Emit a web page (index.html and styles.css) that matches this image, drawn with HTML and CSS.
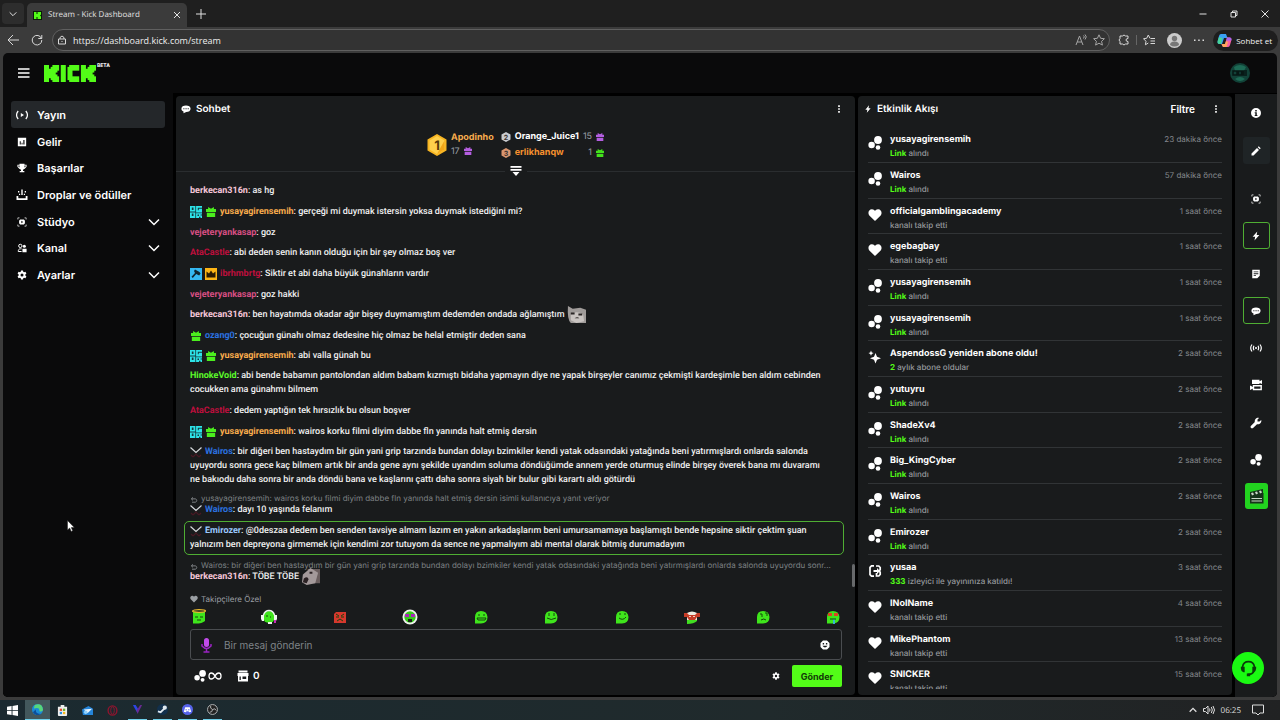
FILE: index.html
```
<!DOCTYPE html>
<html lang="tr">
<head>
<meta charset="utf-8">
<title>Stream - Kick Dashboard</title>
<link rel="stylesheet" href="styles.css">
</head>
<body>
<svg class="defs" aria-hidden="true">
  <symbol id="dots" viewBox="0 0 14 14"><circle cx="10" cy="4" r="3.9"/><circle cx="3.6" cy="9" r="3.2"/><circle cx="10" cy="11.5" r="2.3"/></symbol>
  <symbol id="heart" viewBox="0 0 14 14"><path d="M7 13 1.300 7.400C-.6 5 .8 1.500 3.800 1.300 5.300 1.200 6.300 2 7 2.900 7.700 2 8.700 1.200 10.200 1.300c3 .2 4.400 3.700 2.500 6.100z"/></symbol>
  <symbol id="spark" viewBox="0 0 14 14"><path d="M7.500 3 9 6.700 13 8.200 9 9.700 7.500 13.500 6 9.700 2 8.200 6 6.700zM3 .500l.8 1.900 1.900.7-1.900.8L3 5.800l-.8-1.900L.4 3.100l1.800-.7z"/></symbol>
  <symbol id="host" viewBox="0 0 14 14"><path fill="none" stroke="currentColor" stroke-width="1.700" d="M6 1.800H3.500L2 3.300v7.400l1.500 1.500H6M8 2h2.800l1.400 1.500v2l-.8 1.500.8 1.500v2l-1.400 1.500H8.500V9"/><path d="M5.500 6h3.500V4l3 3-3 3V8H5.500z"/></symbol>
  <symbol id="chat" viewBox="0 0 12 12"><path fill-rule="evenodd" d="M6 1.800c3.200 0 5.500 1.400 5.500 3.800S9.300 9.500 6.300 9.500L3 11.200V9C1.500 8.400.5 7.200.5 5.600.5 3.200 2.800 1.800 6 1.800zM2.800 5v1.300h1.300V5zm2.600 0v1.300h1.300V5zm2.600 0v1.300h1.300V5z"/></symbol>
  <symbol id="bolt" viewBox="0 0 12 12"><path d="M7.500.5 2 7h3l-.8 4.500L10 4.800H6.800z"/></symbol>
  <symbol id="kebab" viewBox="0 0 12 12"><path d="M5 1.500h2v2H5zM5 5h2v2H5zM5 8.500h2v2H5z"/></symbol>
  <symbol id="gear" viewBox="0 0 12 12"><path fill-rule="evenodd" d="M4.800.5h2.400l.3 1.600 1 .6 1.600-.6 1.200 2.100L10 5.400v1.200l1.300 1.200-1.200 2.100-1.600-.6-1 .6-.3 1.600H4.800l-.3-1.600-1-.6-1.600.6L.7 7.800 2 6.600V5.400L.7 4.200l1.200-2.100 1.600.6 1-.6zM6 4.200a1.800 1.800 0 1 0 0 3.600 1.800 1.800 0 0 0 0-3.600z"/></symbol>
  <symbol id="studio" viewBox="0 0 12 12"><path d="M3.500 3h5v1h1v4h-1v1h-5V8h-1V4h1z"/><path d="M5.200 4.500v3L7.500 6z" fill="#111"/><path fill="none" stroke="currentColor" stroke-width=".8" d="M1 3V1h2M9 1h2v2M11 9v2H9M3 11H1V9"/></symbol>
  <symbol id="live" viewBox="0 0 12 12"><path fill="none" stroke="currentColor" stroke-width="1.200" d="M2.200 2C.3 4.300.3 7.700 2.200 10M9.800 2c1.900 2.300 1.900 5.700 0 8"/><path d="M4.800 4v4L8 6z"/></symbol>
  <symbol id="wave" viewBox="0 0 12 12"><path fill="none" stroke="currentColor" stroke-width="1.200" d="M2 2.500C.5 4.500.5 7.500 2 9.500M10 2.500c1.500 2 1.500 5 0 7M4 3.800c-.8 1.400-.8 3 0 4.400M8 3.800c.8 1.400.8 3 0 4.400"/><circle cx="6" cy="6" r="1"/></symbol>
  <symbol id="stats" viewBox="0 0 12 12"><path fill-rule="evenodd" d="M1 1h10v10H1zm2.300 4v4h1.200V5zm2.200 2v2h1.100V7zm2.100-3.500V9H9V3.500z"/></symbol>
  <symbol id="cup" viewBox="0 0 12 12"><path fill-rule="evenodd" d="M3 .8h6V2h2.500v2.500L9.300 6.800 7.200 8v1.700h1.600v1.500H3.200V9.700h1.600V8L2.700 6.800.5 4.500V2H3zM1.700 3v1.300L3 5.500V3zM9 3v2.500l1.300-1.200V3z"/></symbol>
  <symbol id="drop" viewBox="0 0 12 12"><path d="M.500 7h1.800v2.200h7.400V7h1.800v4H.5zM5.300.5h1.400v5.500H5.300zM2 2h1.300v1.500H2zm1 2.800h1.200V6H3zM8.700 2H10v1.500H8.700zm-.9 2.800H9V6H7.800z"/></symbol>
  <symbol id="people" viewBox="0 0 12 12"><circle cx="4" cy="3.500" r="2" fill="none" stroke="currentColor" stroke-width="1.200"/><path fill="none" stroke="currentColor" stroke-width="1.200" d="M5.500 10.200h-4C1.500 8 2.500 7 4 7h1.500"/><circle cx="8.800" cy="4" r="1.800"/><path d="M6.500 6.800h5v4.200h-5z"/></symbol>
  <symbol id="chev" viewBox="0 0 12 12"><path fill="none" stroke="currentColor" stroke-width="1.500" d="M1 3.500 6 8.500 11 3.500"/></symbol>
  <symbol id="info" viewBox="0 0 12 12"><path fill-rule="evenodd" d="M6 1a5 5 0 1 1 0 10A5 5 0 0 1 6 1zm-.8 1.900v1.500h1.600V2.900zM4.700 5.200v1h.6v1.900h-.6v1h2.700v-1h-.6V5.200z"/></symbol>
  <symbol id="pencil" viewBox="0 0 12 12"><path d="M1.500 10.500V8.500L7 3 9 5l-5.500 5.500zM7.800 2.200l.9-.9 2 2-.9.9z"/></symbol>
  <symbol id="note" viewBox="0 0 12 12"><path fill-rule="evenodd" d="M1.500 1h9v7l-3 3h-6zM3.200 3v1h5.600V3zm0 2.200v1h5.600v-1zm0 2.200v1H6v-1z"/></symbol>
  <symbol id="cams" viewBox="0 0 12 12"><path d="M2 .8h7.500v1.400L12 1v4L9.500 4v1H2z"/><path fill="none" stroke="currentColor" stroke-width="1.400" d="M3.500 6.700h7.700v3.800H3.500z"/><path d="M0 6.500 3 8v1.500L0 11z"/></symbol>
  <symbol id="wrench" viewBox="0 0 12 12"><path d="M1.300 11.200.6 10.500v-1.300l4.200-4.100c-.5-2.500 1.700-4.800 4.200-4.200L7.500 2.500v2h2l1.700-1.600c.7 2.500-1.500 4.900-4.200 4.300l-4.200 4z"/></symbol>
  <symbol id="gift" viewBox="0 0 12 12"><path d="M2.500 0 6 2 9.500 0v2.500H12V6H0V2.500h2.500zM1 7h10v5H1z"/></symbol>
  <symbol id="arrows" viewBox="0 0 12 12"><path fill="none" stroke="currentColor" stroke-width="1.500" d="M4.500 2 2 4.300 4.500 6.600M2 4.300h5.500c3.500 0 3.500 5 0 5H3"/></symbol>
  <symbol id="swords" viewBox="0 0 12 12"><path fill="none" stroke="#471923" stroke-width="1.200" d="m3 11 3-3 3 3M1 9l2 2M11 9l-2 2"/><path fill="none" stroke="#d6d9dc" stroke-width="1.200" d="m.500 1.500 5.500 5 5.500-5"/></symbol>
  <symbol id="og" viewBox="0 0 12 12"><path fill="#2de3e8" d="M0 0h12v12H0z"/><path fill="#14393c" d="M1.800 1.500h1.700v2.500H1.800zM5.300 0h.8v12h-.8zM0 5.600h5.500v.8H0zM7.800 1.800H12v1H7.800zM7.800 2.800h1v1.500h-1zM1.800 7.500h1.700V10H1.800zM6 6.500h6v.7H6zM7.500 8.500H9V10H7.500zM10.500 8.500H12v1h-1.500zM9 10.800h1.500V12H9z"/></symbol>
  <symbol id="mod" viewBox="0 0 12 12"><path fill="#35b9f2" d="M0 0h12v12H0z"/><path fill="#102630" d="M5 1.500 9.500 4l1 1.500-1.300 2-3-1.600L2.800 10 1.500 8.800 5 4.900 4 3z"/></symbol>
  <symbol id="vip" viewBox="0 0 12 12"><path fill="#fdb515" d="M0 0h12v12H0z"/><path fill="#2b1b02" d="M1.500 3.500 4 5.500 6 2.500l2 3 2.500-2V9.500h-9z"/></symbol>
  <symbol id="blob" viewBox="0 0 16 16"><path fill="#3fe51c" d="M2 8Q2 2 8 2t6.500 6Q14.500 14 8 14.500H2z"/></symbol>
</svg>

<header class="tabs">
  <button class="tabmenu" aria-label="Sekmeler"><svg class="i8"><use href="#chev"/></svg></button>
  <div class="tab">
    <svg class="i9" viewBox="0 0 9 9"><path fill="#0a1c06" d="M0 0h9v9H0z"/><path fill="#53fc18" d="M1 1h2.500v2h1V1H8v2.500L7 4.500l1 1V8H4.500V6h-1v2H1z"/></svg>
    <span>Stream - Kick Dashboard</span>
    <button aria-label="Kapat"><svg class="i8" viewBox="0 0 8 8"><path class="ln" d="m1 1 6 6M7 1 1 7"/></svg></button>
  </div>
  <button class="plus" aria-label="Yeni sekme"><svg class="i10" viewBox="0 0 10 10"><path class="ln" d="M5 0v10M0 5h10"/></svg></button>
  <div class="win">
    <button aria-label="Simge durumu"><svg class="i8" viewBox="0 0 8 8"><path class="ln" d="M.500 4h7"/></svg></button>
    <button aria-label="Geri yükle"><svg class="i8" viewBox="0 0 8 8"><path class="ln" d="M1 2.500h4.500V7H1zM2.500 2.500V1H7v4.500H5.500"/></svg></button>
    <button aria-label="Pencereyi kapat"><svg class="i8" viewBox="0 0 8 8"><path class="ln" d="m.5.5 7 7m0-7-7 7"/></svg></button>
  </div>
</header>

<div class="toolbar">
  <button aria-label="Geri"><svg class="i12" viewBox="0 0 12 12"><path class="ln" d="M12 6H1M6 1 1 6l5 5"/></svg></button>
  <button aria-label="Yenile"><svg class="i12" viewBox="0 0 12 12"><path class="ln" d="M10.500 4.500A4.800 4.800 0 1 0 10.800 6M10.800 1v3.500H7.300"/></svg></button>
  <div class="url">
    <svg class="i10" viewBox="0 0 10 10"><path class="ln" d="M1.500 4h7v5h-7zM3 4V2.500q2-3 4 0V4M5 6v1"/></svg>
    <input aria-label="Adres" value="https://dashboard.kick.com/stream">
    <svg class="i12 dim" viewBox="0 0 12 12"><path class="ln" d="m1 11 3.500-9L8 11M2.200 8h4.600M8.500 1.500q1.500 1 0 3M10 .5q2.500 2.200 0 5"/></svg>
    <svg class="i12 dim" viewBox="0 0 12 12"><path class="ln" d="m6 .8 1.600 3.500 3.800.4-2.800 2.600.8 3.800L6 9.200l-3.400 1.900.8-3.800L.6 4.700l3.800-.4z"/></svg>
  </div>
  <button aria-label="Uzantılar"><svg class="i12" viewBox="0 0 12 12"><path class="ln" d="M2 2h2.500q1.500-2 3 0H10v2.500q-2 0-2 1.500t2 1.500V10H7.500q-1.500 2-3 0H2V7.500q-2-1.500 0-3z"/></svg></button>
  <i class="bar"></i>
  <button aria-label="Sık kullanılanlar"><svg class="i12" viewBox="0 0 12 12"><path class="ln" d="M7 4.300 5.300 1 3.700 4.300.5 4.700 3 7.300l-.6 3.500L5.300 9M7.500 4.500H12M7.500 7H12M7.500 9.500H12"/></svg></button>
  <button aria-label="Profil"><svg class="i15" viewBox="0 0 15 15"><circle cx="7.500" cy="7.500" r="7.500" fill="#ccc"/><circle cx="7.500" cy="5.500" r="2.700" fill="#777"/><path fill="#777" d="M3 12q0-3.500 4.500-3.500T12 12q-4.500 3-9 0z"/></svg></button>
  <button aria-label="Diğer"><svg class="i10" viewBox="0 0 10 10"><path fill="#ddd" d="M0 4.500h1.500V6H0zM4.200 4.500h1.500V6H4.200zM8.500 4.500H10V6H8.500z"/></svg></button>
  <button class="copilot"><svg class="i15" viewBox="0 0 15 15"><path fill="#3aa0f5" d="M4 1h5l1.500 4H7l-2 6H2.500Q0 11 .7 8L2 3q.5-2 2-2z"/><path fill="#45d49a" d="M.7 8 2 4l3.500 1L4 11H2.500Q0 11 .7 8z"/><path fill="#f75fa5" d="M11 14H6l-1.500-3H8l2-6.500h2.500q2.500 0 1.800 3L13 12q-.5 2-2 2z"/><path fill="#fda75c" d="M6 14 4.500 11H8l1-3 2 1-1.500 5z"/><path fill="#a866f0" d="m10 4.500 2.500 0q2.500 0 1.800 3h-5z"/></svg><span>Sohbet et</span></button>
</div>

<div class="page">
  <header class="top">
    <button aria-label="Menü"><svg class="i12" viewBox="0 0 12 12"><path d="M0 1.300h11.500v1.500H0zM0 5.300h11.500v1.500H0zM0 9.300h11.500v1.500H0z"/></svg></button>
    <svg class="logo" viewBox="0 0 31 9" preserveAspectRatio="none" role="img" aria-label="Kick">
      <g id="kk"><rect width="3" height="9"/><rect x="2" y="2" width="3" height="5"/><rect x="4" y="1" width="3" height="7"/><rect x="5" width="4" height="3"/><rect x="5" y="6" width="4" height="3"/><rect x="5" y="2" width="3" height="2"/><rect x="5" y="5" width="3" height="2"/></g>
      <rect x="10" width="3" height="9"/>
      <rect x="14" y="1" width="3" height="7"/><rect x="15" width="6" height="3"/><rect x="15" y="6" width="6" height="3"/>
      <use href="#kk" x="22"/>
    </svg>
    <sup>BETA</sup>
    <svg class="avatar" viewBox="0 0 20 20"><circle cx="10" cy="10" r="10" fill="#124238"/><path fill="#1d6a55" d="M4 4q6-4 12 0l-2 4H5zM5 16q5-4 10 0-5 4-10 0z"/><path fill="none" stroke="#071714" stroke-width="1.500" d="M3 8h4v4H3zM8.500 8h3v4h-3zM17 8h-4v4h4M13 10h4"/></svg>
  </header>

  <div class="work">
    <nav class="side">
      <a class="on" href="#"><svg class="i12"><use href="#live"/></svg><span>Yayın</span></a>
      <a href="#"><svg class="i10"><use href="#stats"/></svg><span>Gelir</span></a>
      <a href="#"><svg class="i10"><use href="#cup"/></svg><span>Başarılar</span></a>
      <a href="#"><svg class="i12"><use href="#drop"/></svg><span>Droplar ve ödüller</span></a>
      <a href="#"><svg class="i10"><use href="#studio"/></svg><span>Stüdyo</span><svg class="i12 ch"><use href="#chev"/></svg></a>
      <a href="#"><svg class="i10"><use href="#people"/></svg><span>Kanal</span><svg class="i12 ch"><use href="#chev"/></svg></a>
      <a href="#"><svg class="i10"><use href="#gear"/></svg><span>Ayarlar</span><svg class="i12 ch"><use href="#chev"/></svg></a>
    </nav>

    <section class="chat">
      <h2><svg class="i10"><use href="#chat"/></svg><span>Sohbet</span><button aria-label="Sohbet menüsü"><svg class="i10"><use href="#kebab"/></svg></button></h2>
      <div class="leaders">
        <div class="first">
          <svg class="hex" viewBox="0 0 20 22"><path fill="#f7b522" d="M10 0 19.500 5.500v11L10 22 .5 16.500v-11z"/><path fill="#ffd04c" d="m10 2 7.500 4.500v9L10 20l-7.500-4.500v-9z"/><path fill="#f3a719" d="m10 20 7.500-4.500v-9z"/><text x="10" y="15.500" text-anchor="middle">1</text></svg>
          <div><b class="c-or">Apodinho</b><p>17 <svg class="i8 c-pu"><use href="#gift"/></svg></p></div>
        </div>
        <div class="others">
          <svg class="i10 medal" viewBox="0 0 10 10"><path fill="#c9ccd0" d="m5 0 4.500 2.500v5L5 10 .5 7.500v-5z"/><text x="5" y="7.500" text-anchor="middle">2</text></svg><b>Orange_Juice1</b><span>15</span><svg class="i8 c-pu"><use href="#gift"/></svg>
          <svg class="i10 medal" viewBox="0 0 10 10"><path fill="#d99670" d="m5 0 4.500 2.500v5L5 10 .5 7.500v-5z"/><text x="5" y="7.500" text-anchor="middle">3</text></svg><b class="c-do">erlikhanqw</b><span>1</span><svg class="i8 c-gr"><use href="#gift"/></svg>
        </div>
      </div>
      <div class="fold"><button aria-label="Sıralamayı aç"><svg class="i12" viewBox="0 0 12 12"><path d="M.5 1h11v1.800H.5zM.5 4h11v1.800H.5zM2.500 7h7L6 11z"/></svg></button></div>

      <ul class="log">
        <li><b class="c-pk">berkecan316n</b>: as hg</li>
        <li><svg class="bd"><use href="#og"/></svg><svg class="bd gf"><use href="#gift"/></svg><b class="c-or">yusayagirensemih</b>: gerçeği mi duymak istersin yoksa duymak istediğini mi?</li>
        <li><b class="c-ro">vejeteryankasap</b>: goz</li>
        <li><b class="c-rd">AtaCastle</b>: abi deden senin kanın olduğu için bir şey olmaz boş ver</li>
        <li><svg class="bd"><use href="#mod"/></svg><svg class="bd"><use href="#vip"/></svg><b class="c-rd">ibrhmbrtg</b>: Siktir et abi daha büyük günahların vardır</li>
        <li><b class="c-ro">vejeteryankasap</b>: goz hakki</li>
        <li><b class="c-pk">berkecan316n</b>: ben hayatımda okadar ağır bişey duymamıştım dedemden ondada ağlamıştım <svg class="emo" viewBox="0 0 20 20"><path fill="#a09c9a" d="M1 1 6 4l8-1 6 2v14H4Q0 15 1 1z"/><path fill="#c9c4c1" d="M4 10q6-5 13 0l1 7-8 2-6-3z"/><path fill="#2b2726" d="M4 8h4v2H4zM12 9h4v2h-4zM8 14q3-2 5 0z"/></svg></li>
        <li><svg class="bd gf"><use href="#gift"/></svg><b class="c-bl">ozang0</b>: çocuğun günahı olmaz dedesine hiç olmaz be helal etmiştir deden sana</li>
        <li><svg class="bd"><use href="#og"/></svg><svg class="bd gf"><use href="#gift"/></svg><b class="c-or">yusayagirensemih</b>: abi valla günah bu</li>
        <li><b class="c-gn">HinokeVoid</b>: abi bende babamın pantolondan aldım babam kızmıştı bidaha yapmayın diye ne yapak birşeyler canımız çekmişti kardeşimle ben aldım cebinden<br>cocukken ama günahmı bilmem</li>
        <li><b class="c-rd">AtaCastle</b>: dedem yaptığın tek hırsızlık bu olsun boşver</li>
        <li><svg class="bd"><use href="#og"/></svg><svg class="bd gf"><use href="#gift"/></svg><b class="c-or">yusayagirensemih</b>: wairos korku filmi diyim dabbe fln yanında halt etmiş dersin</li>
        <li><svg class="bd"><use href="#swords"/></svg><b class="c-bl">Wairos</b>: bir diğeri ben hastaydım bir gün yani grip tarzında bundan dolayı bzimkiler kendi yatak odasındaki yatağında beni yatırmışlardı onlarda salonda<br>uyuyordu sonra gece kaç bilmem artık bir anda gene aynı şekilde uyandım soluma döndüğümde annem yerde oturmuş elinde birşey överek bana mı duvaramı<br>ne bakıodu daha sonra bir anda döndü bana ve kaşlarını çattı daha sonra siyah bir bulur gibi karartı aldı götürdü</li>
        <li><p><svg class="i8"><use href="#arrows"/></svg>yusayagirensemih: wairos korku filmi diyim dabbe fln yanında halt etmiş dersin isimli kullanıcıya yanıt veriyor</p><svg class="bd"><use href="#swords"/></svg><b class="c-bl">Wairos</b>: dayı 10 yaşında felanım</li>
        <li class="boxed"><svg class="bd"><use href="#swords"/></svg><b class="c-lb">Emirozer</b>: @0deszaa dedem ben senden tavsiye almam lazım en yakın arkadaşlarım beni umursamamaya başlamıştı bende hepsine siktir çektim şuan<br>yalnızım ben depreyona girmemek için kendimi zor tutuyom da sence ne yapmalıyım abi mental olarak bitmiş durumadayım</li>
        <li><p><svg class="i8"><use href="#arrows"/></svg>Wairos: bir diğeri ben hastaydım bir gün yani grip tarzında bundan dolayı bzimkiler kendi yatak odasındaki yatağında beni yatırmışlardı onlarda salonda uyuyordu sonr...</p><b class="c-pk">berkecan316n</b>: TÖBE TÖBE <svg class="emo" viewBox="0 0 20 20"><path fill="#6a5e5e" d="M7 2h13v15H9z"/><path fill="#a3999a" d="M2 8 10 1l8 5-3 11-9 2-5-3z"/><path fill="#2a2123" d="M3 12q4-3 5 1l-2 4-4-1zM9 5h3v2H9z"/></svg></li>
      </ul>

      <div class="foot">
        <p class="only"><svg class="i8"><use href="#heart"/></svg>Takipçilere Özel</p>
        <div class="emotes">
          <button aria-label="Melek"><svg viewBox="0 0 16 16"><path fill="#3fe51c" d="M2 3h12v9q-3 3-12 2.500z"/><ellipse cx="8" cy="2" rx="6.500" ry="1.300" fill="none" stroke="#e8b92f" stroke-width="1.300"/><path class="face" d="M4 8h3M9 8h3M6 11h4"/></svg></button>
          <button aria-label="Kulaklık"><svg viewBox="0 0 16 16"><circle cx="8" cy="8" r="6" fill="#3fe51c"/><path fill="none" stroke="#eef3ee" stroke-width="1.500" d="M2.500 6Q4 1.500 8 1.500T13.500 6"/><path fill="#f1f4f1" d="M0 6h3v6H1L0 10zM13 6h3v4l-1 2h-2zM7 13h4v2H7z"/><path fill="#c832b5" d="M13 11h2v3h-2z"/><path class="face" d="M5 7h2M9 8h1"/></svg></button>
          <button aria-label="Kızgın"><svg viewBox="0 0 16 16"><path fill="#d5382d" d="M4 3h10v11H2V5z"/><path class="face" d="m4 5 3 2M12 5 9 7M5 12l3-2 3 2M4 8h3M9 8h3"/></svg></button>
          <button aria-label="Parti"><svg viewBox="0 0 16 16"><circle cx="8" cy="8" r="7.500" fill="#f0f1ef"/><circle cx="8" cy="8" r="5.700" fill="#36c91a"/><path fill="#a82ab8" d="M3 5h4v3H3zM9 5h4v3H9z"/><path fill="#1b241b" d="M6 10h4v3H6z"/></svg></button>
          <button aria-label="Gülen"><svg viewBox="0 0 16 16"><use href="#blob"/><path class="face" d="M5 6h2M10 6h2M4 9h9l-1 2H5z"/></svg></button>
          <button aria-label="Mutlu"><svg viewBox="0 0 16 16"><use href="#blob"/><path class="face" d="M6 4v3M11 4v3M4 9q4 3 9 0"/></svg></button>
          <button aria-label="Neşeli"><svg viewBox="0 0 16 16"><use href="#blob"/><path class="face" d="M5 5h2M10 5h2M5 9q4 3 7-1"/></svg></button>
          <button aria-label="Maskeli"><svg viewBox="0 0 16 16"><path fill="#42df22" d="M3 8h10v4q-3 3-10 3z"/><path fill="#eeece2" d="M3 4q5-3 10 0v7H3z"/><path fill="#c63c27" d="M0 4h3l2 2h6l2-2h3v4h-3l-2 3H5L3 8H0z"/><path fill="#f0d0c0" d="M5 7h2v1H5zM9 7h2v1H9z"/></svg></button>
          <button aria-label="Düşünen"><svg viewBox="0 0 16 16"><use href="#blob"/><path class="face" d="M5 5h2v3M10 4h2v3M6 11q3-2 5 0"/></svg></button>
          <button aria-label="Hayran"><svg viewBox="0 0 16 16"><use href="#blob"/><path fill="#d94724" d="M3 4h4v3H3zM9 4h4v3H9z"/><path fill="#37b8d1" d="M8 10h2v5H8z"/><path class="face" d="M5 10h6"/></svg></button>
        </div>
        <div class="box">
          <svg class="mic" viewBox="0 0 12 16"><rect x="3.500" y="1" width="5" height="9" rx="2.500" fill="#c24bea"/><path fill="none" stroke="#9a23c2" stroke-width="1.500" d="M1.500 7v2q4.500 5 9 0V7M6 12v3M3 15h6"/></svg>
          <input aria-label="Bir mesaj gönderin" placeholder="Bir mesaj gönderin">
          <button aria-label="Emoji"><svg class="i10" viewBox="0 0 10 10"><path fill-rule="evenodd" d="M3 .5h4L9.500 3v4L7 9.500H3L.5 7V3zM2.700 3v1.500h1.400V3zm3.200 0v1.500h1.400V3zM2.500 5.800Q5 9.300 7.500 5.800z"/></svg></button>
        </div>
        <div class="send">
          <svg class="i12"><use href="#dots"/></svg>
          <svg class="inf" viewBox="0 0 14 10"><path fill="none" stroke="currentColor" stroke-width="1.300" d="M7 5C5 1 1 1 1 5s4 4 6 0 6-4 6 0-4 4-6 0z"/></svg>
          <svg class="i12 shop" viewBox="0 0 12 12"><path fill-rule="evenodd" d="M1.500.5h9v2h-9zM.5 3h11v3H11v5.500H1V6H.5zm2 3.500V10h1.300V6.500zm3 0V9h3.700V6.500z"/></svg>
          <b>0</b>
          <button aria-label="Ayarlar" class="cog"><svg class="i8"><use href="#gear"/></svg></button>
          <button class="go">Gönder</button>
        </div>
      </div>
      <i class="thumb"></i>
    </section>

    <section class="feed">
      <h2><svg class="i8"><use href="#bolt"/></svg><span>Etkinlik Akışı</span><button>Filtre</button><button aria-label="Akış menüsü"><svg class="i10"><use href="#kebab"/></svg></button></h2>
      <ul>
        <li><svg><use href="#dots"/></svg><div><b>yusayagirensemih</b><p><em>Link</em> alındı</p></div><time>23 dakika önce</time></li>
        <li><svg><use href="#dots"/></svg><div><b>Wairos</b><p><em>Link</em> alındı</p></div><time>57 dakika önce</time></li>
        <li><svg><use href="#heart"/></svg><div><b>officialgamblingacademy</b><p>kanalı takip etti</p></div><time>1 saat önce</time></li>
        <li><svg><use href="#heart"/></svg><div><b>egebagbay</b><p>kanalı takip etti</p></div><time>1 saat önce</time></li>
        <li><svg><use href="#dots"/></svg><div><b>yusayagirensemih</b><p><em>Link</em> alındı</p></div><time>1 saat önce</time></li>
        <li><svg><use href="#dots"/></svg><div><b>yusayagirensemih</b><p><em>Link</em> alındı</p></div><time>1 saat önce</time></li>
        <li><svg><use href="#spark"/></svg><div><b>AspendossG yeniden abone oldu!</b><p><em>2</em> aylık abone oldular</p></div><time>2 saat önce</time></li>
        <li><svg><use href="#dots"/></svg><div><b>yutuyru</b><p><em>Link</em> alındı</p></div><time>2 saat önce</time></li>
        <li><svg><use href="#dots"/></svg><div><b>ShadeXv4</b><p><em>Link</em> alındı</p></div><time>2 saat önce</time></li>
        <li><svg><use href="#dots"/></svg><div><b>Big_KingCyber</b><p><em>Link</em> alındı</p></div><time>2 saat önce</time></li>
        <li><svg><use href="#dots"/></svg><div><b>Wairos</b><p><em>Link</em> alındı</p></div><time>2 saat önce</time></li>
        <li><svg><use href="#dots"/></svg><div><b>Emirozer</b><p><em>Link</em> alındı</p></div><time>2 saat önce</time></li>
        <li><svg><use href="#host"/></svg><div><b>yusaa</b><p><em>333</em> izleyici ile yayınınıza katıldı!</p></div><time>3 saat önce</time></li>
        <li><svg><use href="#heart"/></svg><div><b>INoIName</b><p>kanalı takip etti</p></div><time>4 saat önce</time></li>
        <li><svg><use href="#heart"/></svg><div><b>MikePhantom</b><p>kanalı takip etti</p></div><time>13 saat önce</time></li>
        <li><svg><use href="#heart"/></svg><div><b>SNICKER</b><p>kanalı takip etti</p></div><time>15 saat önce</time></li>
      </ul>
    </section>

    <aside class="rail">
      <button aria-label="Bilgi"><svg class="i12"><use href="#info"/></svg></button>
      <button class="soft" aria-label="Düzenle"><svg class="i12"><use href="#pencil"/></svg></button>
      <button class="gap" aria-label="Önizleme"><svg class="i10"><use href="#studio"/></svg></button>
      <button class="sel" aria-label="Etkinlik"><svg class="i10"><use href="#bolt"/></svg></button>
      <button aria-label="Notlar"><svg class="i10"><use href="#note"/></svg></button>
      <button class="sel" aria-label="Sohbet"><svg class="i10"><use href="#chat"/></svg></button>
      <button aria-label="Yayın"><svg class="i12"><use href="#wave"/></svg></button>
      <button aria-label="Kameralar"><svg class="i12"><use href="#cams"/></svg></button>
      <button aria-label="Araçlar"><svg class="i12"><use href="#wrench"/></svg></button>
      <button aria-label="Linkler"><svg class="i12"><use href="#dots"/></svg></button>
      <button class="clap" aria-label="Klip"><svg class="i15" viewBox="0 0 15 15"><path fill="#17331a" d="M1 3 14 0v4h.5v10.500H1z"/><path fill="#cbd8c8" d="m2 4 2-.5 1 2-2 1zM6 3l2-.5 1 2-2 1zM10 2l2-.5 1 2-2 1zM2.500 9H13v1H2.500zM2.500 11.500H13v1H2.500z"/></svg></button>
    </aside>
  </div>
  <button class="help" aria-label="Destek"><svg viewBox="0 0 20 20"><path fill="none" stroke="#0a3a0a" stroke-width="2" d="M3 10V8q1-6 7-6t7 6v2q0 6-6 7H9"/><path fill="#0a3a0a" d="M1 8h4.500v6.500H4Q1 13 1 10zM19 8h-4.500v6.500H16Q19 13 19 10zM8 16h4v3H8z"/></svg></button>
</div>

<footer class="task">
  <button aria-label="Başlat"><svg viewBox="0 0 12 12"><path fill="#fff" d="m0 2 5-.8v4.500H0zM6 1l6-1v5.700H6zM0 6.500h5V11l-5-.8zM6 6.500h6V12l-6-1z"/></svg></button>
  <button class="cur" aria-label="Edge"><svg viewBox="0 0 12 12"><circle cx="6" cy="6" r="6" fill="#1b8bd6"/><path fill="#57d67a" d="M3 1q8-3 9 5 0 3-4 2 1-5-6-3z"/><path fill="#0d4f9a" d="M4 6q0 5 6 5-6 3-9-2z"/></svg></button>
  <button aria-label="Mağaza"><svg viewBox="0 0 12 12"><path fill="#eee" d="M1 2h10v9q0 1-1 1H2q-1 0-1-1zM4 0h4v2H4z"/><path fill="#e64c2d" d="M3 4h2.500v2.500H3z"/><path fill="#6bb12f" d="M6.500 4H9v2.500H6.500z"/><path fill="#2b8de0" d="M3 7.500h2.500V10H3z"/><path fill="#f5b51f" d="M6.500 7.500H9V10H6.500z"/></svg></button>
  <button aria-label="Posta"><svg viewBox="0 0 12 12"><path fill="#2584d8" d="m0 5 7-4 5 3v7H1z"/><path fill="#e8f3fc" d="m2 5 9-1-5 5z"/><circle cx="4" cy="8" r="2" fill="#8fd0fb"/></svg></button>
  <button aria-label="Opera"><svg viewBox="0 0 12 12"><ellipse cx="6" cy="6" rx="4.800" ry="5" fill="none" stroke="#90142e" stroke-width="1.500"/><ellipse cx="6" cy="6" rx="2" ry="4" fill="none" stroke="#90142e"/></svg></button>
  <button class="run" aria-label="Valorant"><svg viewBox="0 0 12 12"><path fill="#2d45e5" d="m1 1 5 9 1-4-3-5z"/><path fill="#6a2a92" d="M11 1 6 11 5 7l4-6z"/></svg></button>
  <button class="run" aria-label="Steam"><svg viewBox="0 0 12 12"><circle cx="6" cy="6" r="6" fill="#12304c"/><path fill="none" stroke="#dfe8ee" stroke-width="2" d="M1 8 4 9l4.500-4.500"/><circle cx="8.500" cy="4" r="2.300" fill="#dfe8ee"/></svg></button>
  <button class="run" aria-label="Discord"><svg viewBox="0 0 12 12"><circle cx="6" cy="6" r="6" fill="#5663ea"/><path fill="#fff" d="M3.500 3.500h5l1.500 5-2 .5-1-1H5L4 9l-2-.5z"/><path fill="#5663ea" d="M4 5.500h1v1.500H4zM7 5.500h1v1.500H7z"/></svg></button>
  <button class="run" aria-label="OBS"><svg viewBox="0 0 12 12"><circle cx="6" cy="6" r="5.400" fill="#222" stroke="#b9bcbd"/><path fill="none" stroke="#b9bcbd" d="M6 6Q3 5 4 2M6 6q3-2 4 1M6 6q0 3-3 3"/></svg></button>
  <div class="tray">
    <svg class="i8" viewBox="0 0 12 12"><path class="ln wide" d="M1 8.500 6 3.500 11 8.500"/></svg>
    <svg class="i12" viewBox="0 0 12 12"><path class="ln" d="M.5 4.500h2L5 2v8L2.500 7.500h-2zM6.500 4.500q1 1.500 0 3M8.300 3q2 3 0 6M10 2q3 4 0 8"/></svg>
    <time>06:25</time>
    <svg class="i12" viewBox="0 0 12 12"><path class="ln" d="M.5 1h11v8H8l-2 2-2-2H.5z"/></svg>
  </div>
</footer>
<svg class="cursor" viewBox="0 0 8 12"><path fill="#fff" stroke="#222" stroke-width=".5" d="M.5.500v9.500l2.200-2 1.500 3.500 1.500-.7L4.300 7.500h3z"/></svg>
</body>
</html>
```
FILE: styles.css
```
* { box-sizing: border-box; }
html, body { height: 100%; }
body {
  margin: 0;
  display: flex;
  flex-direction: column;
  overflow: hidden;
  background: #3b3b3b;
  color: #fff;
  font-family: Inter, "Liberation Sans", sans-serif;
  font-size: 9px;
  text-rendering: geometricPrecision;
}
button, input { font: inherit; color: inherit; background: none; border: 0; padding: 0; margin: 0; }
button { display: flex; align-items: center; justify-content: center; }
ul, p, h2 { margin: 0; padding: 0; list-style: none; }
a { color: inherit; text-decoration: none; }
svg { fill: currentColor; flex: none; }
b { font-weight: 600; }
.defs { position: absolute; width: 0; height: 0; }
.ln { fill: none; stroke: currentColor; stroke-width: 1; }
.wide { stroke-width: 2; }
.i8 { width: 8px; height: 8px; }
.i9 { width: 9px; height: 9px; }
.i10 { width: 10px; height: 10px; }
.i12 { width: 12px; height: 12px; }
.i15 { width: 15px; height: 15px; }

/* browser frame */
.tabs {
  display: flex;
  align-items: stretch;
  height: 27px;
  flex: none;
  background: #1f1f1f;
  font-family: "Open Sans", "Noto Sans", sans-serif;
  color: #e2e2e2;
}
.tabmenu { width: 22px; margin: 3px 3px 3px 2px; background: #2d2d2d; border-radius: 4px; }
.tab {
  display: flex;
  align-items: center;
  gap: 6px;
  width: 160px;
  margin-top: 3px;
  padding: 0 6px;
  background: #3b3b3b;
  border-radius: 5px 5px 0 0;
  font-size: 8px;
}
.tab span { padding-bottom: 1px; }
.tab button { margin-left: auto; }
.plus { width: 27px; }
.win { display: flex; margin-left: auto; }
.win button { width: 31px; }
.toolbar {
  display: flex;
  align-items: center;
  height: 26px;
  flex: none;
  padding: 0 2px 0 7px;
  gap: 12px;
  color: #d8d8d8;
  font-family: "Open Sans", "Noto Sans", sans-serif;
}
.url {
  display: flex;
  align-items: center;
  flex: 1;
  gap: 6px;
  height: 22px;
  margin: 0 -4px 0 -3px;
  padding: 0 4px;
  background: #333;
  border: 1px solid #606060;
  border-radius: 11px;
}
.url input { flex: 1; min-width: 0; color: #eee; }
.dim { opacity: .7; }
.bar { width: 1px; height: 10px; margin: 0 -6px; background: #666; }
.copilot { gap: 4px; height: 21px; margin-left: -3px; padding: 0 6px 0 4px; border-radius: 11px; background: #1e1e1e; color: #f3f3f3; font-size: 8px; }

/* dashboard */
.page {
  position: relative;
  display: flex;
  flex-direction: column;
  flex: 1;
  min-height: 0;
  margin: 0 3px 3px;
  background: #0a0a0b;
  border-radius: 5px;
  overflow: hidden;
}
.top { display: flex; align-items: center; height: 40px; flex: none; padding: 0 27px 0 15px; }
.logo { width: 52px; height: 17px; margin-left: 14px; color: #53fc18; }
.top sup { align-self: flex-start; margin-top: 10px; margin-left: 1px; font-size: 5px; line-height: 6px; font-weight: 700; }
.avatar { width: 20px; height: 20px; margin-left: auto; }
.work { display: flex; flex: 1; min-height: 0; background: #000; gap: 3px; padding-top: 3px; }
.side { width: 170px; flex: none; padding: 8px 8px 6px; margin-top: -3px; background: #0a0a0b; font-size: 11px; }
.side a { display: flex; align-items: center; height: 27px; padding: 0 5px; font-weight: 600; border-radius: 3px; }
.side a:nth-child(3n) { height: 26px; }
.side a > svg:first-child { width: 12px; }
.side span { margin-left: 9px; }
.side .on { background: #24272a; }
.ch { margin-left: auto; }

.chat, .feed { background: #191b1c; border-radius: 4px; margin-bottom: 2px; }
h2 { display: flex; align-items: center; height: 26px; flex: none; font-size: 10px; font-weight: 600; }
.chat { position: relative; display: flex; flex-direction: column; flex: 1; min-width: 0; }
.chat h2 { padding: 0 11px 0 5px; gap: 5px; }
.chat h2 button { margin-left: auto; }
.leaders { display: flex; justify-content: center; gap: 7px; padding-top: 7px; height: 44px; line-height: 14px; color: #9aa0a5; }
.leaders b { font-weight: 700; }
.first { display: flex; align-items: center; gap: 4px; height: 31px; }
.first b, .first p { display: block; }
.first p svg { margin-left: 2px; vertical-align: -1px; }
.hex { width: 20px; height: 22px; }
.hex text { font-size: 13px; font-weight: 700; fill: #573808; }
.medal text { font-size: 7px; font-weight: 700; fill: #3a3330; }
.others { display: grid; grid-template-columns: 10px auto auto 8px; column-gap: 4px; row-gap: 2px; align-items: center; align-content: start; padding-top: 1px; }
.others b { color: #fff; }
.others span { text-align: right; }
.others .c-do { color: #f7912f; }
.fold { display: flex; align-items: center; gap: 5px; height: 12px; margin-top: -1px; flex: none; }
.fold::before, .fold::after { content: ""; flex: 1; height: 1px; background: #2a2d2f; }
.c-or { color: #f9ad4d; }
.c-pu { color: #b45ee0; }
.c-gr { color: #43e21c; }
.c-pk { color: #f6c6d8; }
.c-ro { color: #d84f83; }
.c-rd { color: #bd0f3d; }
.c-bl { color: #2b72e0; }
.c-gn { color: #5dfb2a; }
.c-lb { color: #9cc9ff; }

.log { flex: 1; min-height: 0; padding: 7px 11px 0 14px; overflow: hidden; font-family: Roboto, Inter, sans-serif; line-height: 14px; font-weight: 500; color: #f0f0f0; }
.log b { font-weight: 700; }
.log li { margin-bottom: 7px; white-space: nowrap; }
.log li:nth-child(3n), .log li:nth-child(8) { margin-bottom: 6px; }
.bd { width: 12px; height: 12px; margin: -2px 3px -2px 0; vertical-align: -2px; }
.gf { height: 10px; color: #4bee1e; vertical-align: -1px; }
.emo { width: 19px; height: 19px; margin: -5px 0; vertical-align: middle; }
.log p { height: 10px; margin-top: -1px; font-family: Inter, sans-serif; font-size: 8px; font-weight: 400; line-height: 10px; color: #7d8184; overflow: hidden; text-overflow: ellipsis; }
.log p svg { margin: -2px 3px -2px 0; vertical-align: -1px; }
.log .boxed { margin: -3px 0 4px -6px; padding: 2px 5px; border: 1px solid #4fae33; border-radius: 5px; }

.foot { flex: none; padding: 0 13px 8px 14px; }
.only { display: flex; align-items: center; gap: 3px; height: 14px; font-size: 8px; color: #9b9fa3; }
.emotes { display: flex; justify-content: space-between; height: 23px; align-items: center; padding: 0 1px 2px; }
.emotes svg { width: 16px; height: 16px; }
.face { fill: none; stroke: #16440d; stroke-width: 1; }
.box { display: flex; align-items: center; height: 31px; padding: 0 11px 0 9px; border: 1px solid #4a4d50; border-radius: 3px; font-size: 10px; }
.mic { width: 13px; height: 16px; }
.box input { flex: 1; min-width: 0; margin-left: 11px; }
.box input::placeholder { color: #7f8488; opacity: 1; }
.send { display: flex; align-items: center; height: 22px; margin-top: 5px; padding-left: 4px; font-size: 10px; }
.inf { width: 14px; height: 10px; margin-left: 2px; }
.shop { margin: 0 4px 0 15px; }
.cog { margin-left: auto; }
.go { width: 50px; height: 22px; margin-left: 12px; border-radius: 2px; background: #53fc18; color: #123a07; font-size: 9px; font-weight: 700; }
.thumb { position: absolute; right: 0; bottom: 108px; width: 3px; height: 23px; background: #67696b; border-radius: 2px; }

.feed { display: flex; flex-direction: column; width: 374px; flex: none; padding: 0 10px 6px; }
.feed h2 { padding: 0 1px 0 0; gap: 5px; margin-left: -4px; }
.feed h2 button { margin-left: 11px; }
.feed h2 span + button { margin-left: auto; }
.feed ul { flex: 1; min-height: 0; overflow: hidden; margin-top: 5px; }
.feed li { display: flex; align-items: flex-start; height: 36px; padding-top: 6px; border-bottom: 1px solid #313436; }
.feed li:nth-child(3n) { height: 35px; }
.feed li > svg { width: 14px; height: 14px; margin: 3px 8px 0 0; }
.feed b { display: block; font-size: 9px; font-weight: 700; line-height: 14px; }
.feed p { font-size: 8px; line-height: 13px; color: #96999c; font-weight: 500; }
.feed em { font-style: normal; font-weight: 700; color: #53fc18; }
.feed time { margin-left: auto; font-size: 8px; line-height: 13px; color: #85898d; }

.rail { display: flex; flex-direction: column; align-items: center; gap: 10px; width: 42px; flex: none; margin-top: -2px; padding-top: 5px; background: #191b1c; }
.rail button { width: 27px; height: 27px; flex: none; border-radius: 3px; }
.rail button:first-child, .rail button:nth-child(4n) { margin-bottom: 1px; }
.rail .soft { background: #1f2426; }
.rail .gap { margin-top: 11px; }
.rail .sel { border: 1px solid #4fae33; }
.rail .clap { width: 23px; height: 26px; background: #22d31f; }
.help { position: absolute; right: 13px; bottom: 13px; width: 32px; height: 32px; border-radius: 50%; background: #1afa12; }
.help svg { width: 17px; height: 17px; }

.task { display: flex; height: 20px; flex: none; background: linear-gradient(90deg, #1b2a30, #202a2c 60%, #212223); }
.task button { width: 25px; }
.task button svg { width: 11px; height: 11px; }
.task .cur { background: #43585c; border-bottom: 1px solid #6fd0ea; }
.task .run { border-bottom: 1px solid #6fd0ea; width: 19px; margin: 0 3px; }
.tray { display: flex; align-items: center; gap: 6px; margin-left: auto; padding-right: 16px; color: #dedede; font-family: "Open Sans", sans-serif; }
.tray time { font-size: 8px; }
.tray time + svg { margin-left: 5px; }
.cursor { position: absolute; left: 67px; top: 520px; width: 8px; height: 12px; }
```
